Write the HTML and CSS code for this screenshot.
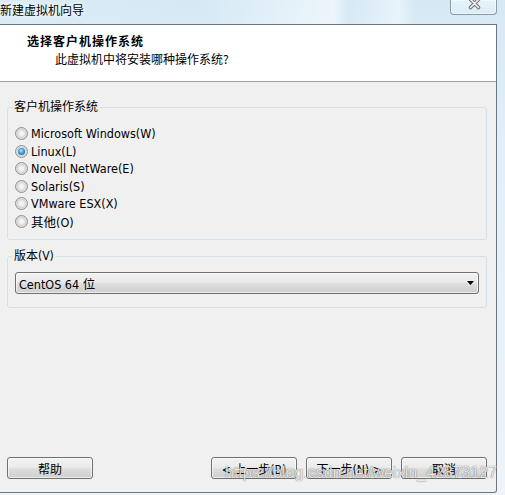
FILE: index.html
```html
<!DOCTYPE html>
<html lang="zh-CN">

<head>
  <meta charset="UTF-8">
  <meta name="viewport" content="width=device-width, initial-scale=1.0">
  <title>新建虚拟机向导</title>
  <link rel="stylesheet" href="styles.css">
</head>

<body>
  <div class="wizard-window">
    <div class="title-bar">
      <span class="title-text">新建虚拟机向导</span>
      <button class="close-btn" title="关闭">
        <svg width="13" height="10" viewBox="0 0 13 10">
          <path d="M2.5 -0.5 L10.5 7.5 M10.5 -0.5 L2.5 7.5" stroke="#707070" stroke-width="3.6" stroke-linecap="round" fill="none" />
          <path d="M2.5 -0.5 L10.5 7.5 M10.5 -0.5 L2.5 7.5" stroke="#f4f4f4" stroke-width="1.6" stroke-linecap="round" fill="none" />
        </svg>
      </button>
    </div>

    <div class="client-area">
      <div class="wizard-header">
        <h1>选择客户机操作系统</h1>
        <p>此虚拟机中将安装哪种操作系统?</p>
      </div>

      <div class="wizard-body">
        <fieldset class="group-box os-box">
          <legend>客户机操作系统</legend>
          <label class="option"><input type="radio" name="os">Microsoft Windows(W)</label>
          <label class="option"><input type="radio" name="os" checked>Linux(L)</label>
          <label class="option"><input type="radio" name="os">Novell NetWare(E)</label>
          <label class="option"><input type="radio" name="os">Solaris(S)</label>
          <label class="option"><input type="radio" name="os">VMware ESX(X)</label>
          <label class="option"><input type="radio" name="os">其他(O)</label>
        </fieldset>

        <fieldset class="group-box version-box">
          <legend>版本(V)</legend>
          <div class="combo">
            <span>CentOS 64 位</span>
            <svg class="combo-arrow" width="7" height="4" viewBox="0 0 7 4">
              <path d="M0 0 H7 L3.5 4 Z" fill="#000" />
            </svg>
          </div>
        </fieldset>

        <div class="button-row">
          <button class="btn">帮助</button>
          <div class="nav-buttons">
            <button class="btn">&lt; 上一步(B)</button>
            <button class="btn">下一步(N) &gt;</button>
            <button class="btn">取消</button>
          </div>
        </div>
      </div>
    </div>

    <!-- 截图上的水印 -->
    <div class="watermark">https://blog.csdn.net/weixin_42873127</div>
  </div>
</body>

</html>
```

FILE: styles.css
```css
* {
  margin: 0;
  padding: 0;
  box-sizing: border-box;
}

body {
  font-family: "DejaVu Sans Condensed", "Liberation Sans", "Noto Sans CJK SC", sans-serif;
  font-size: 12px;
  color: #000;
  background: #fff;
}

.wizard-window {
  position: relative;
  width: 505px;
  height: 495px;
  overflow: hidden;
  background: linear-gradient(to bottom, #d5e9f5 0%, #e2eff8 30%, #eef4f8 100%);
}

.title-bar {
  height: 24px;
  display: flex;
  justify-content: space-between;
  align-items: flex-start;
  padding-right: 8px;
  background: linear-gradient(to right,
      rgba(255, 255, 255, 0.1) 0%,
      rgba(255, 255, 255, 0) 40%,
      rgba(255, 255, 255, 0.55) 66%,
      rgba(255, 255, 255, 0) 69%,
      rgba(255, 255, 255, 0.45) 79%,
      rgba(255, 255, 255, 0) 82%);
}

.title-text {
  font-family: "Noto Sans CJK SC", sans-serif;
  line-height: 20px;
  text-shadow: 0 0 6px #fff, 0 0 6px #fff;
}

.close-btn {
  width: 47px;
  height: 15px;
  border: 1px solid #8d9aa5;
  border-top: none;
  border-radius: 0 0 4px 4px;
  background: linear-gradient(to bottom, #e6f3fa, #dcedf7);
  box-shadow: inset 0 0 0 1px rgba(255, 255, 255, 0.5);
  display: flex;
  justify-content: center;
  align-items: flex-start;
  padding-left: 2px;
}

.client-area {
  width: 497px;
  height: 469px;
  border: 1px solid #6b7680;
  border-left: none;
  border-bottom-right-radius: 3px;
  background: #f0f0f0;
  display: flex;
  flex-direction: column;
  overflow: hidden;
}

.wizard-header {
  height: 57px;
  background: #fff;
  border-bottom: 1px solid #a0a0a0;
  padding-top: 7px;
  font-family: "Noto Sans CJK SC", sans-serif;
}

.wizard-header h1 {
  font-size: 12px;
  font-weight: bold;
  line-height: 18px;
  padding-left: 27px;
  letter-spacing: 1px;
}

.wizard-header p {
  line-height: 18px;
  padding-left: 55px;
}

.wizard-body {
  flex: 1;
  display: flex;
  flex-direction: column;
  padding: 0 9px 13px 7px;
}

.group-box {
  border: 1px solid #d5dfe5;
  border-radius: 3px;
  padding: 10px 7px 9px;
  margin-top: 18px;
}

.group-box legend {
  margin-left: -3px;
  padding: 0 2px;
  line-height: 15px;
}

.option {
  height: 17.5px;
  display: flex;
  align-items: center;
  gap: 3px;
  font-size: 12.5px;
}

.option input {
  appearance: none;
  flex-shrink: 0;
  width: 13px;
  height: 13px;
  border: 1px solid #8e8f8f;
  border-radius: 50%;
  background: radial-gradient(circle, #f7f7f7 0, #eeeeee 2.5px, #d2d2d2 4.5px, #e9e9e9 5.5px);
  display: flex;
  justify-content: center;
  align-items: center;
}

.option input:checked::after {
  content: '';
  width: 7px;
  height: 7px;
  border-radius: 50%;
  background: radial-gradient(circle at 45% 40%, #b7ecff 0, #3a9ede 45%, #144a7a 100%);
}

.version-box {
  margin-top: 9px;
  padding: 8px 7px 13px;
}

.combo {
  height: 22px;
  border: 1px solid #707070;
  border-radius: 3px;
  background: linear-gradient(to bottom, #f2f2f2 0%, #ebebeb 45%, #dddddd 55%, #cfcfcf 100%);
  box-shadow: inset 0 0 0 1px rgba(255, 255, 255, 0.6);
  display: flex;
  justify-content: space-between;
  align-items: center;
  padding: 0 4px 0 3px;
  font-size: 12.5px;
}

.button-row {
  margin-top: auto;
  display: flex;
  justify-content: space-between;
}

.nav-buttons {
  display: flex;
  gap: 9px;
}

.btn {
  width: 86px;
  height: 22px;
  border: 1px solid #707070;
  border-radius: 3px;
  background: linear-gradient(to bottom, #f2f2f2 0%, #ebebeb 45%, #dddddd 55%, #cfcfcf 100%);
  box-shadow: inset 0 0 0 1px rgba(255, 255, 255, 0.6);
  font-family: inherit;
  font-size: 12px;
  color: #000;
  cursor: pointer;
}

.watermark {
  position: absolute;
  left: 225px;
  top: 465px;
  font-family: "Liberation Sans", sans-serif;
  font-size: 16px;
  line-height: 16px;
  color: rgba(255, 255, 255, 0.85);
  text-shadow: 0 0 1px rgba(0, 0, 0, 0.5), 0 0 1px rgba(0, 0, 0, 0.25);
  pointer-events: none;
  white-space: nowrap;
}
```
